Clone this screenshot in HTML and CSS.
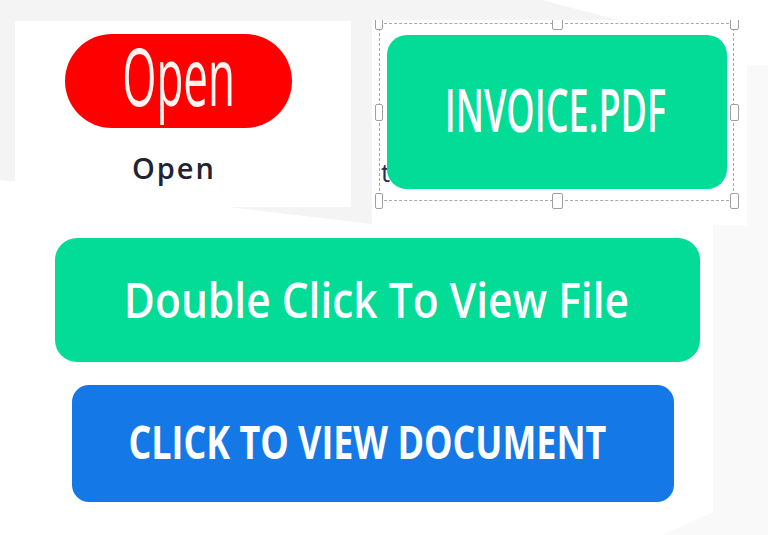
FILE: index.html
```html
<!DOCTYPE html>
<html lang="en">
<head>
<meta charset="utf-8">
<title>Open file buttons</title>
<link rel="stylesheet" href="styles.css">
</head>
<body>
<div class="backdrop-left"></div>
<div class="backdrop-right"></div>
<main class="page">
  <section class="top-row">
    <div class="card card-left">
      <div class="pill-red"><span class="pill-text">Open</span></div>
      <div class="open-label">Open</div>
    </div>
    <div class="card card-right">
      <span class="stray-t">t</span>
      <div class="selection">
        <div class="btn-invoice"><span class="invoice-text">INVOICE.PDF</span></div>
        <span class="handle h-tl"></span>
        <span class="handle h-tm"></span>
        <span class="handle h-tr"></span>
        <span class="handle h-ml"></span>
        <span class="handle h-mr"></span>
        <span class="handle h-bl"></span>
        <span class="handle h-bm"></span>
        <span class="handle h-br"></span>
      </div>
    </div>
  </section>
  <div class="btn-double"><span class="double-text">Double Click To View File</span></div>
  <div class="btn-blue"><span class="blue-text">CLICK TO VIEW DOCUMENT</span></div>
</main>
</body>
</html>
```

FILE: styles.css
```css
html, body {
  margin: 0;
  padding: 0;
}
body {
  width: 768px;
  height: 535px;
  overflow: hidden;
  background: #ffffff;
  position: relative;
  font-family: "Open Sans", "Noto Sans", "DejaVu Sans", sans-serif;
}
.backdrop-left {
  position: absolute;
  inset: 0;
  background: #f4f4f4;
  clip-path: polygon(0 0, 542px 0, 622px 21px, 372px 21px, 372px 224px, 0 180px);
}
.backdrop-right {
  position: absolute;
  inset: 0;
  background: #f9f9f9;
  clip-path: polygon(747px 65px, 768px 65px, 768px 535px, 662px 535px, 713px 512px, 713px 225px, 747px 225px);
}
.page {
  position: relative;
  display: flex;
  flex-direction: column;
  align-items: flex-start;
}
.top-row {
  display: flex;
  align-items: flex-start;
  gap: 21px;
  padding: 20px 0 0 15px;
}
.card {
  background: #ffffff;
}
.card-left {
  width: 336px;
  height: 186px;
  margin-top: 1px;
  display: flex;
  flex-direction: column;
  align-items: flex-start;
}
.pill-red {
  margin: 13px 0 0 50px;
  width: 227px;
  height: 94px;
  border-radius: 47px;
  background: #ff0000;
  display: flex;
  align-items: center;
  justify-content: center;
}
.pill-text {
  display: inline-block;
  color: #fff4f0;
  font-weight: 400;
  font-size: 80px;
  line-height: 1;
  transform: translateY(-6px) scaleX(0.55);
}
.open-label {
  align-self: stretch;
  text-align: center;
  margin: 25px 18px 0 0;
  font-size: 29px;
  font-weight: 600;
  line-height: 1;
  letter-spacing: 2px;
  color: #1e2433;
}
.card-right {
  position: relative;
  width: 375px;
  height: 203px;
  overflow: hidden;
}
.stray-t {
  position: absolute;
  left: 9px;
  top: 139px;
  font-size: 26px;
  line-height: 1;
  color: #1f2f55;
}
.selection {
  position: relative;
  margin: 3px 0 0 7px;
  border: 1px dashed #a8a8a8;
  display: flex;
  padding: 11px 6px 11px 7px;
  box-sizing: border-box;
  height: 178px;
  width: 355px;
}
.btn-invoice {
  flex: 1;
  min-width: 0;
  position: relative;
  background: #02dc96;
  border-radius: 20px;
  display: flex;
  align-items: center;
  justify-content: center;
}
.invoice-text {
  display: inline-block;
  flex: none;
  color: #ffffff;
  font-size: 59px;
  font-weight: 600;
  line-height: 1;
  white-space: nowrap;
  transform: translate(-2px, -3px) scaleX(0.61);
}
.handle {
  position: absolute;
  width: 8px;
  height: 14px;
  background: #ffffff;
  border: 1px solid #a0a0a0;
  border-radius: 2px;
  box-sizing: border-box;
}
.h-tl, .h-tm, .h-tr { top: -8px; }
.h-ml, .h-mr { top: 80px; height: 17px; }
.h-bl, .h-bm, .h-br { bottom: -9px; height: 16px; }
.h-tl, .h-ml, .h-bl { left: -5px; }
.h-tm, .h-bm { left: 172px; width: 11px; }
.h-tr, .h-mr, .h-br { right: -6px; width: 9px; }
.btn-double {
  margin: 15px 0 0 55px;
  width: 645px;
  height: 124px;
  border-radius: 22px;
  background: #02dc96;
  display: flex;
  align-items: center;
  justify-content: center;
}
.double-text {
  display: inline-block;
  flex: none;
  color: #ffffff;
  font-size: 48px;
  font-weight: 600;
  line-height: 1;
  white-space: nowrap;
  transform: translateX(-1px) scaleX(0.885);
}
.btn-blue {
  margin: 23px 0 0 72px;
  width: 602px;
  height: 117px;
  border-radius: 17px;
  background: #1479e6;
  display: flex;
  align-items: center;
  justify-content: center;
}
.blue-text {
  display: inline-block;
  flex: none;
  color: #ffffff;
  font-size: 46px;
  font-weight: 700;
  line-height: 1;
  white-space: nowrap;
  transform: translate(-6px, -3px) scaleX(0.78);
}
```
